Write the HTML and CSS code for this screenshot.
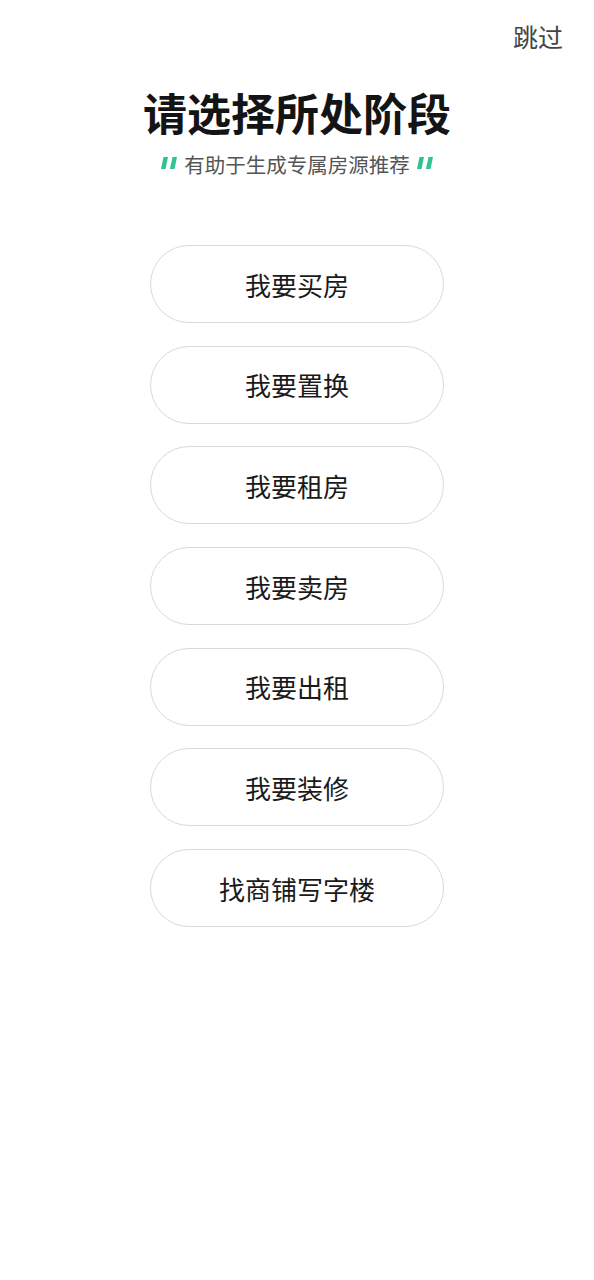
FILE: index.html
```html
<!DOCTYPE html>
<html lang="zh-CN">
<head>
<meta charset="utf-8">
<title>请选择所处阶段</title>
<link rel="stylesheet" href="styles.css">
</head>
<body>
<div class="page">
  <div class="topbar"><span class="skip">跳过</span></div>
  <h1 class="title">请选择所处阶段</h1>
  <div class="subtitle">
    <svg class="quote" width="18" height="14" viewBox="0 0 18 14"><polygon points="3.5,1 8,1 5.5,13 1,13" fill="#2dc48d"/><polygon points="12.5,1 17,1 14.5,13 10,13" fill="#2dc48d"/></svg>
    <span class="subtext">有助于生成专属房源推荐</span>
    <svg class="quote" width="18" height="14" viewBox="0 0 18 14"><polygon points="3.5,1 8,1 5.5,13 1,13" fill="#2dc48d"/><polygon points="12.5,1 17,1 14.5,13 10,13" fill="#2dc48d"/></svg>
  </div>
  <div class="options">
    <div class="option">我要买房</div>
    <div class="option">我要置换</div>
    <div class="option">我要租房</div>
    <div class="option">我要卖房</div>
    <div class="option">我要出租</div>
    <div class="option">我要装修</div>
    <div class="option">找商铺写字楼</div>
  </div>
</div>
</body>
</html>
```
FILE: styles.css
```css
html, body {
  margin: 0;
  padding: 0;
  background: #ffffff;
}
body {
  font-family: "Noto Sans CJK SC", "Noto Sans", sans-serif;
  color: #1a1a1a;
}
.page {
  width: 594px;
  min-height: 1280px;
  display: flex;
  flex-direction: column;
  align-items: center;
}
.topbar {
  align-self: stretch;
  display: flex;
  justify-content: flex-end;
  padding: 19px 31px 0 0;
}
.skip {
  font-size: 25px;
  line-height: 34px;
  color: #444444;
}
.title {
  margin: 29px 0 0;
  font-size: 44px;
  line-height: 60px;
  font-weight: 700;
  color: #141414;
}
.subtitle {
  margin-top: 7px;
  display: flex;
  align-items: center;
  gap: 6px;
  height: 30px;
}
.quote {
  display: block;
  margin-top: -2px;
}
.subtext {
  font-size: 20.5px;
  line-height: 30px;
  color: #555555;
}
.options {
  margin-top: 66px;
  display: flex;
  flex-direction: column;
  gap: 22.7px;
}
.option {
  box-sizing: border-box;
  width: 294px;
  height: 78px;
  border: 1px solid #d9d9d9;
  border-radius: 39px;
  display: flex;
  align-items: center;
  justify-content: center;
  font-size: 26px;
  color: #1a1a1a;
}
```
